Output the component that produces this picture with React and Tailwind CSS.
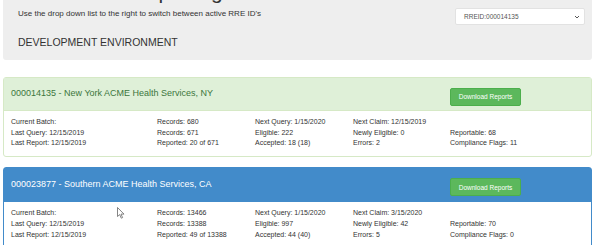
import React from 'react';

const cols = 'grid grid-cols-[146px_98px_98px_97px_1fr]';

const reports = [
  {
    id: '000014135',
    name: 'New York ACME Health Services, NY',
    tone: 'green',
    rows: [
      ['Current Batch:', 'Records: 680', 'Next Query: 1/15/2020', 'Next Claim: 12/15/2019', ''],
      ['Last Query: 12/15/2019', 'Records: 671', 'Eligible: 222', 'Newly Eligible: 0', 'Reportable: 68'],
      ['Last Report: 12/15/2019', 'Reported: 20 of 671', 'Accepted: 18 (18)', 'Errors: 2', 'Compliance Flags: 11'],
    ],
  },
  {
    id: '000023877',
    name: 'Southern ACME Health Services, CA',
    tone: 'blue',
    rows: [
      ['Current Batch:', 'Records: 13466', 'Next Query: 1/15/2020', 'Next Claim: 3/15/2020', ''],
      ['Last Query: 12/15/2019', 'Records: 13388', 'Eligible: 997', 'Newly Eligible: 42', 'Reportable: 70'],
      ['Last Report: 12/15/2019', 'Reported: 49 of 13388', 'Accepted: 44 (40)', 'Errors: 5', 'Compliance Flags: 0'],
    ],
  },
];

const ReportPanel = ({ report, cursor }) => {
  const green = report.tone === 'green';
  return (
    <div className={`rounded-[3px] border ${green ? 'border-[#d6e9c6]' : 'border-[#428bca]'} bg-white`}>
      <div className={`${cols} items-center ${green ? 'h-[33px]' : 'h-[34px]'} px-[7px] ${green ? 'bg-[#dff0d8] text-[#3c763d]' : 'bg-[#428bca] text-white'} border-b ${green ? 'border-[#d6e9c6]' : 'border-[#428bca]'}`}>
        <div className="col-span-4 text-[9px]">{report.id} - {report.name}</div>
        <div>
          <button className="h-[18px] w-[71px] rounded-[2px] bg-[#5cb85c] border border-[#4cae4c] text-white text-[6.5px]">
            Download Reports
          </button>
        </div>
      </div>
      <div className={`relative ${cols} px-[7px] pt-[6px] pb-[7px] text-[7px] leading-[10.7px] text-[#333]`}>
        {report.rows.flat().map((t, i) => (
          <div key={i}>{t}</div>
        ))}
        {cursor && (
          <svg className="absolute left-[113px] top-[5px]" width="8" height="12" viewBox="0 0 8 12">
            <path d="M0.5 0.5 L0.5 9.5 L2.7 7.6 L4.3 11.2 L5.6 10.6 L4 7.1 L7 7.1 Z" fill="white" stroke="#666" strokeWidth="0.8" />
          </svg>
        )}
      </div>
    </div>
  );
};

export default function App() {
  return (
    <div className="min-h-screen bg-white px-[3px] overflow-hidden" style={{ fontFamily: '"Liberation Sans", Arial, sans-serif' }}>
      <div className="-mt-[17px]">
        {/* header box */}
        <div className="flex justify-between rounded-[3px] bg-[#eeeeee] pl-[15px] pr-[7px] pb-[12px]">
          <div>
            <h1 className="-mt-[3px] text-[21px] leading-[23px] text-[#333]">Section 111 Reporting</h1>
            <p className="mt-[6px] text-[8px] leading-[10px] text-[#333]">
              Use the drop down list to the right to switch between active RRE ID's
            </p>
            <h4 className="mt-[17px] text-[10.5px] leading-[12px] text-[#333]">DEVELOPMENT ENVIRONMENT</h4>
          </div>
          <div className="mt-[25px] self-start flex items-center justify-between w-[130px] h-[17px] bg-white border border-[#e2e2e2] rounded-[2px] pl-[8px] pr-[4px] text-[6.5px] text-[#555]">
            <span>RREID:000014135</span>
            <svg width="6" height="4" viewBox="0 0 6 4">
              <path d="M1 1 L3 3 L5 1" fill="none" stroke="#444" strokeWidth="0.9" />
            </svg>
          </div>
        </div>

        <div className="mt-[17px] flex flex-col gap-[10px]">
          {reports.map((r, i) => (
            <ReportPanel key={r.id} report={r} cursor={i === 1} />
          ))}
        </div>
      </div>
    </div>
  );
}
